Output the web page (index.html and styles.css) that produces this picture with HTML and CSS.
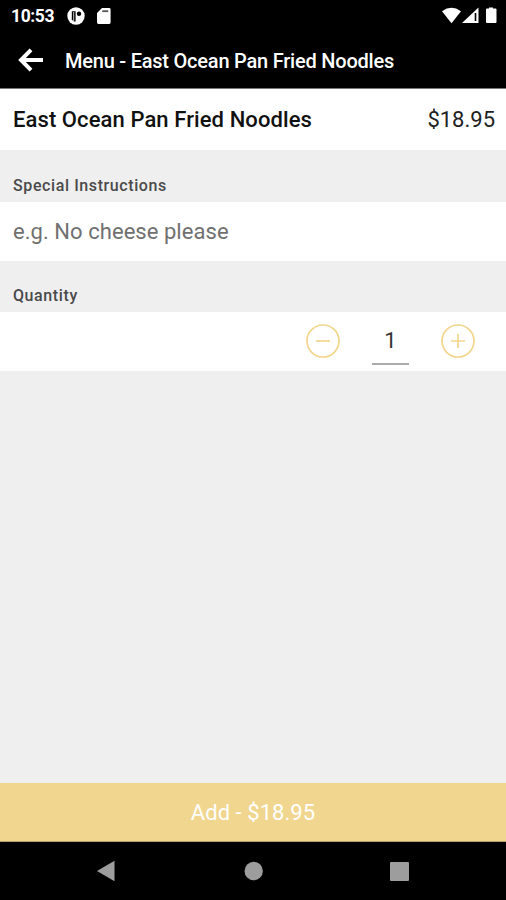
FILE: index.html
```html
<!DOCTYPE html>
<html lang="en">
<head>
<meta charset="utf-8">
<title>Menu - East Ocean Pan Fried Noodles</title>
<link rel="stylesheet" href="styles.css">
</head>
<body>
<div class="screen">
  <div class="status">
    <span class="clock">10:53</span>
    <svg class="status-app" width="18" height="18" viewBox="0 0 18 18"><circle cx="9" cy="9" r="8.7" fill="#fff"/><path d="M4.800 4.200h3.800v10.200H7A6 6 0 0 1 4.800 12.500z" fill="#000"/><path d="M6.700 5v9" stroke="#fff" stroke-width=".8"/><circle cx="12" cy="6.800" r="2.200" fill="#000"/></svg>
    <svg class="status-card" width="14" height="16" viewBox="0 0 14 16"><path d="M5 0h7.200A1.400 1.400 0 0 1 13.600 1.400v13.200a1.400 1.400 0 0 1-1.400 1.400H1.400A1.400 1.400 0 0 1 0 14.600V5z" fill="#fff"/><path d="M5.200 3.200h6" stroke="#555" stroke-width="1.800"/></svg>
    <svg class="status-system" width="56" height="18" viewBox="0 0 56 18"><path d="M0 4.200Q9.500-2.500 19 4.200L9.500 16.200z" fill="#fff"/><path d="M36.500.500v15.500H20z" fill="#fff"/><path d="M33.500 6v8" stroke="#000" stroke-width="1.600"/><path d="M47 1.500V.500h4v1h2.500q1 0 1 1v12.500q0 1-1 1h-8.500q-1 0-1-1V2.500q0-1 1-1z" fill="#fff"/></svg>
  </div>
  <header class="bar">
    <svg class="back" width="26" height="24" viewBox="0 0 26 24"><path d="M13 1.800L3 12l10 10.200M3 12h22" fill="none" stroke="#fff" stroke-width="4"/></svg>
    <h1 class="bar-title">Menu - East Ocean Pan Fried Noodles</h1>
  </header>
  <div class="item">
    <span class="item-name">East Ocean Pan Fried Noodles</span>
    <span class="item-price">$18.95</span>
  </div>
  <div class="label"><span>Special Instructions</span></div>
  <div class="field"><span>e.g. No cheese please</span></div>
  <div class="label label-second"><span>Quantity</span></div>
  <div class="quantity">
    <svg class="step" width="36" height="36" viewBox="0 0 36 36"><circle cx="18" cy="18" r="16"/><path d="M11 18h14"/></svg>
    <span class="amount">1</span>
    <svg class="step" width="36" height="36" viewBox="0 0 36 36"><circle cx="18" cy="18" r="16"/><path d="M11 18h14M18 11v14"/></svg>
  </div>
  <div class="add"><span>Add - $18.95</span></div>
  <div class="nav">
    <svg width="506" height="58" viewBox="0 0 506 58"><path d="M97 29l17.500-10.200v20.400z"/><circle cx="253.700" cy="29" r="9.200"/><rect x="390" y="20" width="19" height="19" rx="1"/></svg>
  </div>
</div>
</body>
</html>
```

FILE: styles.css
```css
* { box-sizing: border-box; }
body { margin: 0; font-family: Roboto, "Liberation Sans", sans-serif; }
.screen { width: 506px; height: 900px; display: flex; flex-direction: column; background: #efefef; overflow: hidden; }
.screen span, .bar-title { white-space: nowrap; }
.status { height: 32px; flex: none; background: #000; color: #fff; display: flex; align-items: center; padding: 0 8px 0 11px; }
.clock { width: 56px; font-size: 17.5px; font-weight: 700; letter-spacing: -.4px; }
.status-card { margin-left: 12px; }
.status-system { margin-left: auto; }
.bar { height: 57px; flex: none; background: #000; border-bottom: 1px solid #777; display: flex; align-items: center; padding-left: 18px; }
.bar-title { margin: 1px 0 0 21px; color: #fff; font-size: 20px; font-weight: 500; letter-spacing: -.22px; }
.item { height: 61px; flex: none; background: #fff; display: flex; align-items: center; justify-content: space-between; padding: 0 11px 0 13px; color: #111; }
.item-name { font-size: 22px; font-weight: 500; letter-spacing: .09px; }
.item-price { font-size: 22px; color: #222; }
.label { height: 52px; flex: none; padding: 26px 13px 0; font-size: 16px; line-height: 20px; font-weight: 500; letter-spacing: .6px; color: #4a4a4a; }
.label-second { height: 51px; padding-top: 25px; }
.field { height: 59px; flex: none; background: #fff; padding-left: 13px; display: flex; align-items: center; font-size: 22px; letter-spacing: .05px; color: #707070; }
.quantity { height: 59px; flex: none; background: #fff; display: flex; align-items: center; justify-content: flex-end; gap: 31px; padding: 0 30px 1px 0; }
.step { fill: none; stroke: #f3d68c; stroke-width: 1.7; }
.amount { width: 37px; height: 44px; margin-top: 4px; border-bottom: 2px solid #aaa; text-align: center; font-size: 22px; line-height: 40px; color: #333; }
.add { height: 59px; flex: none; margin-top: auto; background: #f0d68e; color: #fff; display: flex; align-items: center; justify-content: center; font-size: 22px; letter-spacing: .05px; border-bottom: 1px solid #b5a16b; }
.nav { height: 58px; flex: none; background: #000; }
.nav svg { display: block; fill: #9d9d9d; }
```
